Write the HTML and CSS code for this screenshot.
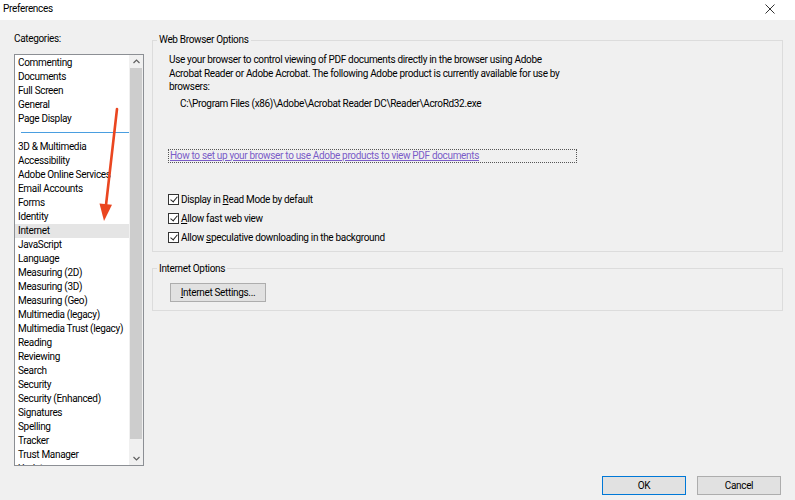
FILE: index.html
```html
<!DOCTYPE html>
<html lang="en">
<head>
    <meta charset="UTF-8">
    <title>Preferences</title>
    <link rel="stylesheet" href="styles.css">
</head>
<body>
    <div class="dialog">
        <div class="titlebar">
            <span class="title">Preferences</span>
            <svg class="close" width="10" height="10" viewBox="0 0 10 10">
                <path d="M0.5 0.5 L9.5 9.5 M9.5 0.5 L0.5 9.5" stroke="#333" stroke-width="1" fill="none"/>
            </svg>
        </div>

        <div class="content">
            <div class="categories">
                <div class="label">Categories:</div>
                <div class="listbox">
                    <ul class="list">
                        <li>Commenting</li>
                        <li>Documents</li>
                        <li>Full Screen</li>
                        <li>General</li>
                        <li>Page Display</li>
                        <li class="sep"></li>
                        <li>3D &amp; Multimedia</li>
                        <li>Accessibility</li>
                        <li>Adobe Online Services</li>
                        <li>Email Accounts</li>
                        <li>Forms</li>
                        <li>Identity</li>
                        <li class="selected">Internet</li>
                        <li>JavaScript</li>
                        <li>Language</li>
                        <li>Measuring (2D)</li>
                        <li>Measuring (3D)</li>
                        <li>Measuring (Geo)</li>
                        <li>Multimedia (legacy)</li>
                        <li>Multimedia Trust (legacy)</li>
                        <li>Reading</li>
                        <li>Reviewing</li>
                        <li>Search</li>
                        <li>Security</li>
                        <li>Security (Enhanced)</li>
                        <li>Signatures</li>
                        <li>Spelling</li>
                        <li>Tracker</li>
                        <li>Trust Manager</li>
                        <li>Updater</li>
                    </ul>
                    <div class="scrollbar">
                        <div class="arrow">
                            <svg width="7" height="5" viewBox="0 0 7 5"><path d="M0.5 4 L3.5 1 L6.5 4" stroke="#606060" stroke-width="1.2" fill="none"/></svg>
                        </div>
                        <div class="track"><div class="thumb"></div></div>
                        <div class="arrow">
                            <svg width="7" height="5" viewBox="0 0 7 5"><path d="M0.5 1 L3.5 4 L6.5 1" stroke="#606060" stroke-width="1.2" fill="none"/></svg>
                        </div>
                    </div>
                    <svg class="annot" width="130" height="200" viewBox="0 0 130 200">
                        <path d="M102 54 L91 150" stroke="#ea4620" stroke-width="2.6" fill="none" stroke-linecap="round"/>
                        <path d="M89 166 L84.5 148.4 L97 149.8 Z" fill="#ea4620"/>
                    </svg>
                </div>
            </div>

            <div class="panel">
                <fieldset class="group browser">
                    <legend>Web Browser Options</legend>
                    <p class="intro">Use your browser to control viewing of PDF documents directly in the browser using Adobe Acrobat Reader or Adobe Acrobat. The following Adobe product is currently available for use by browsers:</p>
                    <p class="path">C:\Program Files (x86)\Adobe\Acrobat Reader DC\Reader\AcroRd32.exe</p>
                    <div class="focus"><a href="#">How to set up your browser to use Adobe products to view PDF documents</a></div>
                    <div class="checks">
                        <label class="check"><span class="box"></span><span>Display in <u>R</u>ead Mode by default</span></label>
                        <label class="check"><span class="box"></span><span><u>A</u>llow fast web view</span></label>
                        <label class="check"><span class="box"></span><span>Allow <u>s</u>peculative downloading in the background</span></label>
                    </div>
                </fieldset>

                <fieldset class="group internet">
                    <legend>Internet Options</legend>
                    <button class="btn settings"><u>I</u>nternet Settings...</button>
                </fieldset>
            </div>
        </div>

        <div class="footer">
            <button class="btn default">OK</button>
            <button class="btn">Cancel</button>
        </div>
    </div>
</body>
</html>
```

FILE: styles.css
```css
* {
    margin: 0;
    padding: 0;
    box-sizing: border-box;
}

body {
    font-family: Roboto, "Noto Sans", sans-serif;
    font-size: 10px;
    letter-spacing: -0.33px;
    color: #000;
    background: #f0f0f0;
}

.dialog {
    width: 795px;
    height: 500px;
    display: flex;
    flex-direction: column;
    overflow: hidden;
}

.titlebar {
    height: 20px;
    background: #fff;
    display: flex;
    justify-content: space-between;
    align-items: center;
    padding: 0 20px 4px 3px;
}

.close {
    margin-top: 1px;
}

.content {
    flex: 1;
    display: flex;
    gap: 8px;
    padding: 12px 12px 0 14px;
}

/* left column */
.categories {
    width: 130px;
    flex-shrink: 0;
}

.label {
    line-height: 14px;
    margin-bottom: 8px;
}

.listbox {
    position: relative;
    height: 412px;
    border: 1px solid #8c8f94;
    background: #fff;
    display: flex;
    overflow: hidden;
}

.list {
    flex: 1;
    min-width: 0;
    list-style: none;
    padding-top: 1px;
}

.list li {
    height: 14px;
    line-height: 14px;
    padding-left: 3px;
    white-space: nowrap;
    overflow: hidden;
}

.list li.sep::after {
    content: "";
    display: block;
    margin: 6px 0 0 3px;
    height: 1px;
    background: #4a9ee0;
}

.list li.selected {
    background: #e5e5e5;
}

.scrollbar {
    width: 14px;
    flex-shrink: 0;
    background: #f0f0f0;
    display: flex;
    flex-direction: column;
}

.arrow {
    height: 13px;
    display: flex;
    align-items: center;
    justify-content: center;
}

.track {
    flex: 1;
    padding: 0 1px 13px;
}

.thumb {
    height: 100%;
    background: #cdcdcd;
}

.annot {
    position: absolute;
    left: 0;
    top: 0;
}

/* right side */
.panel {
    flex: 1;
}

.group {
    border: 1px solid #dcdcdc;
    padding: 0 16px;
}

.group legend {
    line-height: 14px;
    padding: 0 2px;
    margin-left: -12px;
}

.browser {
    margin-top: 1px;
    padding-top: 6px;
    padding-bottom: 6px;
}

.intro {
    line-height: 13.5px;
    width: 392px;
}

.path {
    line-height: 14px;
    margin: 3px 0 0 11px;
}

.focus {
    width: 409px;
    height: 14px;
    margin: 38px 0 0 -1px;
    padding-left: 1px;
    border: 1px dotted #555;
    line-height: 12px;
}

.focus a {
    color: #7a5cc8;
    text-decoration: underline;
}

.checks {
    margin-top: 30px;
    display: flex;
    flex-direction: column;
    gap: 5px;
}

.check {
    display: flex;
    align-items: center;
    height: 14px;
    line-height: 14px;
    margin-left: -1px;
}

.box {
    width: 11px;
    height: 11px;
    border: 1px solid #333;
    background: #fff;
    margin-right: 2px;
    position: relative;
}

.box::after {
    content: "";
    position: absolute;
    left: 3px;
    top: 0;
    width: 3px;
    height: 6px;
    border: solid #222;
    border-width: 0 1px 1px 0;
    transform: rotate(40deg);
}

.internet {
    margin-top: 10px;
    padding-top: 7px;
    padding-bottom: 8px;
}

.btn {
    font-family: inherit;
    font-size: 10px;
    letter-spacing: inherit;
    color: #000;
    height: 19px;
    background: #e1e1e1;
    border: 1px solid #adadad;
}

.settings {
    width: 96px;
    margin-left: 1px;
}

.footer {
    display: flex;
    justify-content: flex-end;
    gap: 11px;
    padding: 0 14px 5px 0;
}

.footer .btn {
    width: 84px;
}

.btn.default {
    border-color: #0078d7;
}
```
